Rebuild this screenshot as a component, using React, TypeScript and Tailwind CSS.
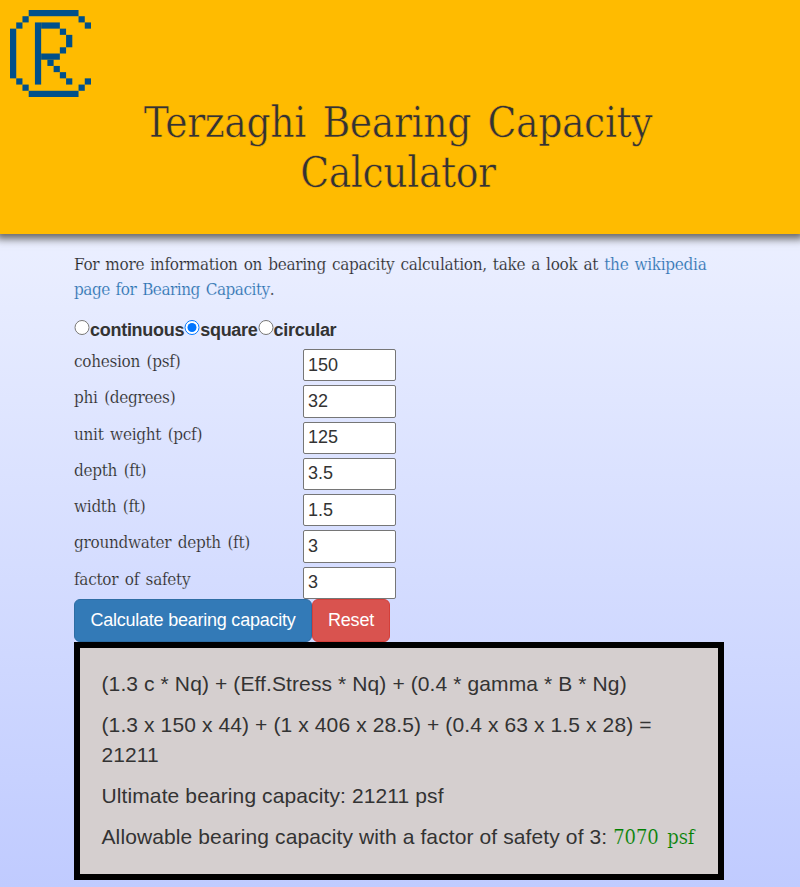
import React, { useState } from "react";

const slab = "font-['DejaVu_Serif_Condensed','DejaVu_Serif',serif] [font-stretch:condensed]";
const slabBody = "text-[17px] leading-[25px] tracking-[-0.3px] whitespace-nowrap [-webkit-text-stroke:0.2px_#e4e8ff]";

// Logo cells on a 13 x 14 grid: [column, row, width, height]
const cells = [
  [3, 0, 8, 1], [2, 1, 1, 1], [1, 2, 1, 1], [0, 3, 1, 8], [1, 11, 1, 1], [2, 12, 1, 1],
  [3, 13, 8, 1], [11, 12, 1, 1], [12, 11, 1, 1], [11, 1, 1, 1], [12, 2, 1, 1],
  [4, 2, 1, 10], [5, 2, 3, 1], [8, 3, 1, 1], [9, 4, 1, 2], [8, 6, 1, 1], [5, 7, 3, 1],
  [6, 8, 1, 1], [7, 9, 1, 1], [8, 10, 1, 1], [9, 11, 1, 1],
];

function Logo() {
  return (
    <svg className="block h-[87px] w-[81px]" viewBox="0 0 13 14" preserveAspectRatio="none" fill="#00508a">
      {cells.map(([x, y, w, h]) => (
        <rect key={`${x}-${y}`} x={x} y={y} width={w} height={h} />
      ))}
    </svg>
  );
}

const fields = [
  { label: "cohesion (psf)", value: "150" },
  { label: "phi (degrees)", value: "32" },
  { label: "unit weight (pcf)", value: "125" },
  { label: "depth (ft)", value: "3.5" },
  { label: "width (ft)", value: "1.5" },
  { label: "groundwater depth (ft)", value: "3" },
  { label: "factor of safety", value: "3" },
];

export default function App() {
  const [shape, setShape] = useState("square");
  return (
    <div className="h-[887px] overflow-hidden bg-linear-to-b from-[#fbfcff] to-[#c0cbff] font-['Liberation_Sans',Arial,sans-serif] text-lg text-[#333]">
      <header className="h-[234px] bg-[#ffbb00] px-2.5 pt-2.5 shadow-[0_1px_8px_4px_#666]">
        <Logo />
        <h1 className={`${slab} pr-1 pt-px text-center text-[42px] leading-[50px] tracking-[-0.4px] [word-spacing:5px] [-webkit-text-stroke:0.5px_#ffbb00]`}>
          Terzaghi Bearing Capacity
          <br />
          Calculator
        </h1>
      </header>
      <main className="ml-[74px] w-[650px] pt-[18px]">
        <p className={`${slab} ${slabBody} h-[65px] text-[#222] [word-spacing:1.5px]`}>
          For more information on bearing capacity calculation, take a look at <a className="text-[#266fae]">the wikipedia</a>
          <br />
          <a className="tracking-[-0.5px] text-[#266fae]">page for Bearing Capacity</a>.
        </p>
        <div className="flex h-[26px] pt-px font-bold leading-[25px] tracking-[-0.28px]">
          {["continuous", "square", "circular"].map((s) => (
            <label key={s} className="flex">
              <input type="radio" name="shape" checked={shape === s} onChange={() => setShape(s)} className="mt-[2px] mr-0 h-[15px] w-[16px]" />
              {s}
            </label>
          ))}
        </div>
        <div className="mt-[6px]">
          {fields.map((f) => (
            <div key={f.label} className="flex h-[36.25px]">
              <span className={`${slab} ${slabBody} w-[229px] text-[#222] [word-spacing:2px]`}>{f.label}</span>
              <input defaultValue={f.value} className="h-[32.4px] w-[93px] rounded-[2px] border border-[#767676] bg-white px-[4px] text-lg" />
            </div>
          ))}
        </div>
        <div className="-mt-[3.75px] flex h-[43px] text-white">
          <button className="w-[238px] rounded-md border border-[#2e6da4] bg-[#337ab7] pb-[2px] tracking-[-0.23px]">Calculate bearing capacity</button>
          <button className="w-[78px] rounded-md border border-[#d43f3a] bg-[#d9534f] pb-[2px] tracking-[-0.2px]">Reset</button>
        </div>
        <section className="flex h-[238px] flex-col gap-[11px] border-6 border-black bg-[#d5cfcf] pt-[21px] pr-4 pl-[21.5px] text-[21px] leading-[30px] tracking-[0.11px]">
          <p>(1.3 c * Nq) + (Eff.Stress * Nq) + (0.4 * gamma * B * Ng)</p>
          <p>(1.3 x 150 x 44) + (1 x 406 x 28.5) + (0.4 x 63 x 1.5 x 28) = 21211</p>
          <p>Ultimate bearing capacity: 21211 psf</p>
          <p className="whitespace-nowrap">
            Allowable bearing capacity with a factor of safety of 3: <span className={`${slab} text-[20px] leading-none tracking-[-0.1px] text-[#008000] [word-spacing:3px] [-webkit-text-stroke:0.2px_#d5cfcf]`}>7070 psf</span>
          </p>
        </section>
      </main>
    </div>
  );
}
